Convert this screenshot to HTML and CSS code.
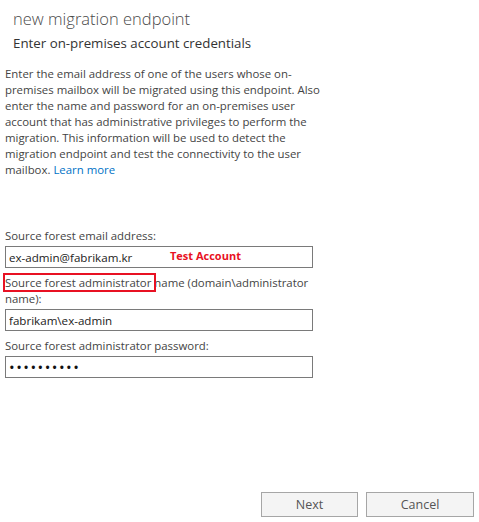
FILE: index.html
```html
<!DOCTYPE html>
<html lang="en">
<head>
    <meta charset="UTF-8">
    <meta name="viewport" content="width=device-width, initial-scale=1.0">
    <title>new migration endpoint</title>
    <link rel="stylesheet" href="styles.css">
</head>
<body>
    <div class="dialog">
        <div class="header">
            <h1>new migration endpoint</h1>
            <h2>Enter on-premises account credentials</h2>
        </div>
        <p class="intro">Enter the email address of one of the users whose on-premises mailbox will be migrated using this endpoint. Also enter the name and password for an on-premises user account that has administrative privileges to perform the migration. This information will be used to detect the migration endpoint and test the connectivity to the user mailbox. <a href="#">Learn more</a></p>

        <div class="fields">
            <div class="field">
                <label for="email">Source forest email address:</label>
                <input type="text" id="email" value="ex-admin@fabrikam.kr">
                <span class="note">Test Account</span>
            </div>
            <div class="field">
                <label for="admin"><span class="mark">Source forest administrator </span>name (domain\administrator name):</label>
                <input type="text" id="admin" value="fabrikam\ex-admin">
            </div>
            <div class="field">
                <label for="pwd">Source forest administrator password:</label>
                <input type="password" id="pwd" class="secret" value="1234567890">
            </div>
        </div>

        <div class="actions">
            <button class="next">Next</button>
            <button class="cancel">Cancel</button>
        </div>
    </div>
</body>
</html>
```
FILE: styles.css
```css
html, body {
    margin: 0;
    padding: 0;
    height: 100%;
}
body {
    font-family: "Open Sans", "Noto Sans", sans-serif;
    font-size: 11.4px;
    color: #444;
    background: #fff;
}
.dialog {
    display: flex;
    flex-direction: column;
    height: 100%;
    box-sizing: border-box;
    padding: 0 5px 5px 5px;
}
.header {
    padding-left: 8px;
}
h1 {
    margin: 7px 0 0 0;
    font-size: 16.5px;
    font-weight: 300;
    line-height: 24px;
    color: #4a4a4a;
}
h2 {
    margin: 2px 0 0 0;
    font-size: 13.3px;
    font-weight: 400;
    line-height: 20px;
    color: #333;
}
.intro {
    margin: 13px 0 0 0;
    width: 322px;
    line-height: 16px;
}
.intro a {
    color: #0072c6;
    text-decoration: none;
}
.fields {
    margin-top: 50px;
}
.field {
    position: relative;
    width: 308px;
    margin-bottom: 7px;
}
.field label {
    display: block;
    line-height: 16px;
    margin-bottom: 2px;
}
.field input {
    display: block;
    box-sizing: border-box;
    width: 308px;
    height: 22px;
    margin: 0;
    padding: 0 3px;
    border: 1px solid #7a7a7a;
    font-family: inherit;
    font-size: 11.6px;
    color: #222;
    outline: none;
}
.field input.secret {
    font-size: 15px;
    letter-spacing: 1.5px;
    color: #111;
}
.note {
    position: absolute;
    left: 165px;
    top: 20px;
    color: #e81123;
    font-weight: 700;
    font-size: 11px;
}
.mark {
    outline: 2px solid #e81123;
    outline-offset: 0;
}
.actions {
    margin-top: auto;
    display: flex;
    justify-content: flex-end;
    gap: 8px;
}
.actions button {
    height: 25px;
    border: 1px solid #a6a6a6;
    background: #f4f4f4;
    color: #555;
    font-family: inherit;
    font-size: 12.5px;
    padding: 0;
    cursor: pointer;
}
.next {
    width: 97px;
}
.cancel {
    width: 108px;
}
```
